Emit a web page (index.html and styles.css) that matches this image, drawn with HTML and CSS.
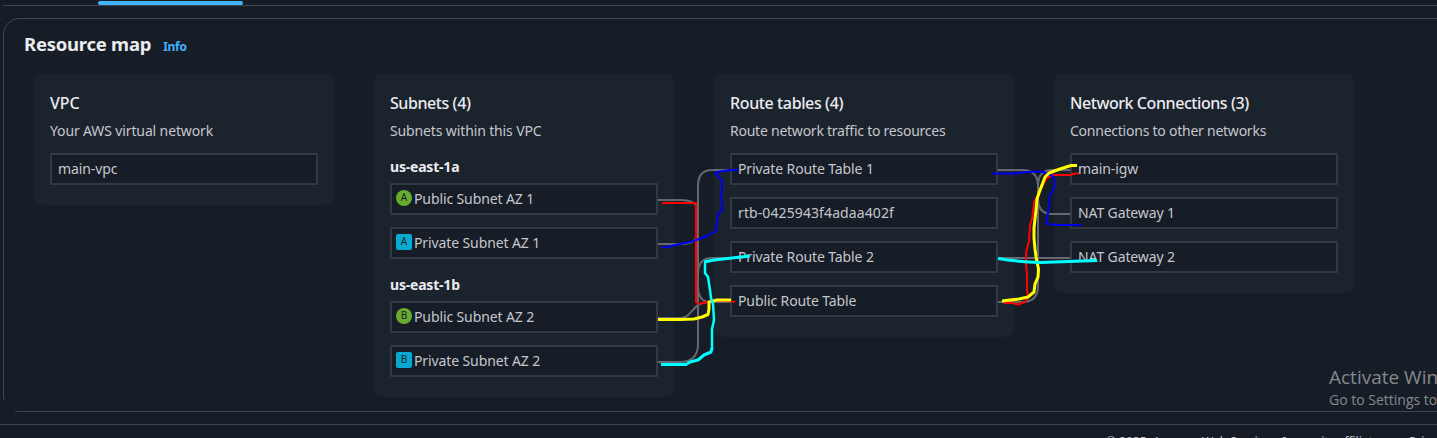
FILE: index.html
```html
<!DOCTYPE html>
<html lang="en">
<head>
<meta charset="utf-8">
<title>Resource map</title>
<link rel="stylesheet" href="styles.css">
</head>
<body>
<div class="page">
  <div class="tabs"><span class="tab-active"></span></div>
  <main class="card">
    <header class="card-head"><h1>Resource map</h1><a class="info">Info</a></header>
    <div class="columns">
      <section class="col">
        <h2 class="t-vpc">VPC</h2><p class="d-vpc">Your AWS virtual network</p>
        <div class="list"><div class="node"><span>main-vpc</span></div></div>
      </section>
      <section class="col">
        <h2 class="t-sub">Subnets (4)</h2><p class="d-sub">Subnets within this VPC</p>
        <h3>us-east-1a</h3>
        <div class="list">
          <div class="node sub"><i class="badge public">A</i><span>Public Subnet AZ 1</span></div>
          <div class="node sub"><i class="badge">A</i><span>Private Subnet AZ 1</span></div>
        </div>
        <h3 class="second">us-east-1b</h3>
        <div class="list">
          <div class="node sub"><i class="badge public">B</i><span>Public Subnet AZ 2</span></div>
          <div class="node sub"><i class="badge">B</i><span>Private Subnet AZ 2</span></div>
        </div>
      </section>
      <section class="col">
        <h2 class="t-rt">Route tables (4)</h2><p class="d-rt">Route network traffic to resources</p>
        <div class="list">
          <div class="node"><span>Private Route Table 1</span></div>
          <div class="node id"><span>rtb-0425943f4adaa402f</span></div>
          <div class="node"><span>Private Route Table 2</span></div>
          <div class="node"><span>Public Route Table</span></div>
        </div>
      </section>
      <section class="col">
        <h2 class="t-net">Network Connections (3)</h2><p class="d-net">Connections to other networks</p>
        <div class="list">
          <div class="node"><span>main-igw</span></div>
          <div class="node"><span>NAT Gateway 1</span></div>
          <div class="node"><span>NAT Gateway 2</span></div>
        </div>
      </section>
    </div>
  </main>
  <footer class="footer"><span class="legal">© 2025, Amazon Web Services, Inc. or its affiliates.</span><span>Privacy</span></footer>
  <svg class="overlay" width="1437" height="438" viewBox="0 0 1437 438" fill="none">
    <g stroke="#656871" stroke-width="2">
      <path d="M658 200H680Q698 200 698 212V286Q698 302 710 302H730"/>
      <path d="M658 244H682Q698 244 698 230V186Q698 170 712 170H730"/>
      <path d="M658 318H680C690 318 692 308 700 304Q704 302 712 302H730"/>
      <path d="M658 362H680Q698 362 698 344V274Q698 258 712 258H730"/>
      <path d="M998 170H1022Q1038 170 1038 186V198Q1038 214 1052 214H1070"/>
      <path d="M998 258H1070"/>
      <path d="M998 302H1022Q1038 302 1038 286V186Q1038 170 1052 170H1070"/>
    </g>
    <g stroke-linejoin="round">
      <g stroke="#f00" stroke-width="2">
        <path d="M662 203H696V302L699 304L706 302L712 301H730L735 302"/>
        <path d="M1004 303H1012L1018 304.500L1025 302L1028 297L1027 290V275L1026 264V253L1029 241L1030 225L1032 219L1033 212L1034 202L1037 197L1041 188L1047 178L1053 175H1070L1075 173.500H1079"/>
      </g>
      <g stroke="#0000f0" stroke-width="2">
        <path d="M662 247H667L675 245L690 242L702 238L709 235L716 231L717 221L718 214L722 210V203L721 197L722 191V181L719 177L715 173L720 171.500L730 170H738"/>
        <path d="M992 173.500H1015L1027 172L1042 171.500L1051 175L1054 178V188L1050 196L1049 205L1048 213L1046 222L1048 224L1058 225H1081"/>
      </g>
      <g stroke="#ff0" stroke-width="3">
        <path d="M658 319.500H680L694 319L702 317L708 314.500L709 309V302L717 300H731"/>
        <path d="M1002 301L1019 299L1028 297L1034 292L1035 284L1038 277L1038.500 269L1036 257L1035 249L1034 238V228L1036 210L1037 199L1039 193L1042 185L1045 177L1049 173L1060 169L1071 165.500H1077"/>
      </g>
      <g stroke="#0ff">
        <path stroke-width="3" d="M661 364.500H686L690 362L698 360L704 355L711 352L712 348"/>
        <path stroke-width="2.500" d="M712 350V329L714 320L713 304L711 298L710 290L708 277L705 273V263"/>
        <path stroke-width="3" d="M704 262L714 260L750 256M998 258.500Q1020 262 1040 262.500L1097 260.500"/>
      </g>
    </g>
  </svg>
  <aside class="activation"><div>Activate Windows</div><p>Go to Settings to activate Windows.</p></aside>
</div>
</body>
</html>
```

FILE: styles.css
```css
*{box-sizing:border-box}
body{margin:0;background:#161d26;color:#c6c6cd;font:14px/20px "Noto Sans",sans-serif}
.page{position:relative;width:1437px;height:438px;overflow:hidden}
h1,h2,h3,p{margin:0}
.tabs{height:6px;margin-left:3px;border-bottom:1px solid #424650;padding:1px 0 0 95px}
.tab-active{display:block;width:145px;height:4px;border-radius:2px;background:#42b4ff}
.card{position:relative;margin:12px -20px 0 3px;height:394px;border:1px solid #424650;border-radius:16px;padding:13px 20px}
/* open corner at the lower left */
.card::after{content:"";position:absolute;left:-1px;bottom:-1px;width:12px;height:12px;background:#161d26}
.card-head{display:flex;align-items:baseline;gap:12px;height:41px;line-height:24px}
h1{font-size:18.5px;line-height:24px;color:#ebebf0;font-weight:700;letter-spacing:-.25px;white-space:nowrap}
.info{font-size:12px;font-weight:700;color:#42b4ff;letter-spacing:-.3px}
.columns{display:flex;align-items:flex-start;gap:40px;padding-left:10px}
.col{width:300px;flex:none;background:#1b232d;border-radius:8px;padding:20px 16px}
h2{font-size:16px;line-height:20px;font-weight:500;color:#ebebf0;margin-bottom:8px;white-space:nowrap}
.t-sub,.t-net{letter-spacing:-.43px}
.t-rt{letter-spacing:-.38px}
.col p{margin-bottom:12px;white-space:nowrap}
.d-vpc,.d-sub{letter-spacing:-.13px}
.d-rt,.d-net{letter-spacing:-.24px}
h3{font-size:14px;line-height:20px;font-weight:700;color:#ebebf0;margin:16px 0 6px;letter-spacing:-.2px}
.list{display:flex;flex-direction:column;gap:12px}
.node{width:268px;height:32px;border:2px solid #333843;background:#161d26;padding-left:6px;display:flex;align-items:center;white-space:nowrap;letter-spacing:-.11px}
.node.id{letter-spacing:.1px}
.node.sub{padding-left:4px;gap:2px}
.badge{width:16px;height:16px;border-radius:2px;background:#08aad2;color:#161d26;font:10px/15px "Noto Sans",sans-serif;text-align:center;position:relative;top:-1px}
.badge.public{border-radius:50%;background:#67ac2f}
.footer{height:26px;margin-top:12px;border-top:1px solid #424650;display:flex;padding:8px 0 0 1106px;font-size:12px;line-height:18px;white-space:nowrap}
.legal{width:303px;flex:none;letter-spacing:0}
.overlay{position:absolute;left:0;top:0}
.activation{position:absolute;left:1329px;top:364px;color:#85898e;font-family:"Open Sans",sans-serif;white-space:nowrap}
.activation div{font-size:19px;line-height:26px}
.activation p{font-size:14px;line-height:20px}
```
